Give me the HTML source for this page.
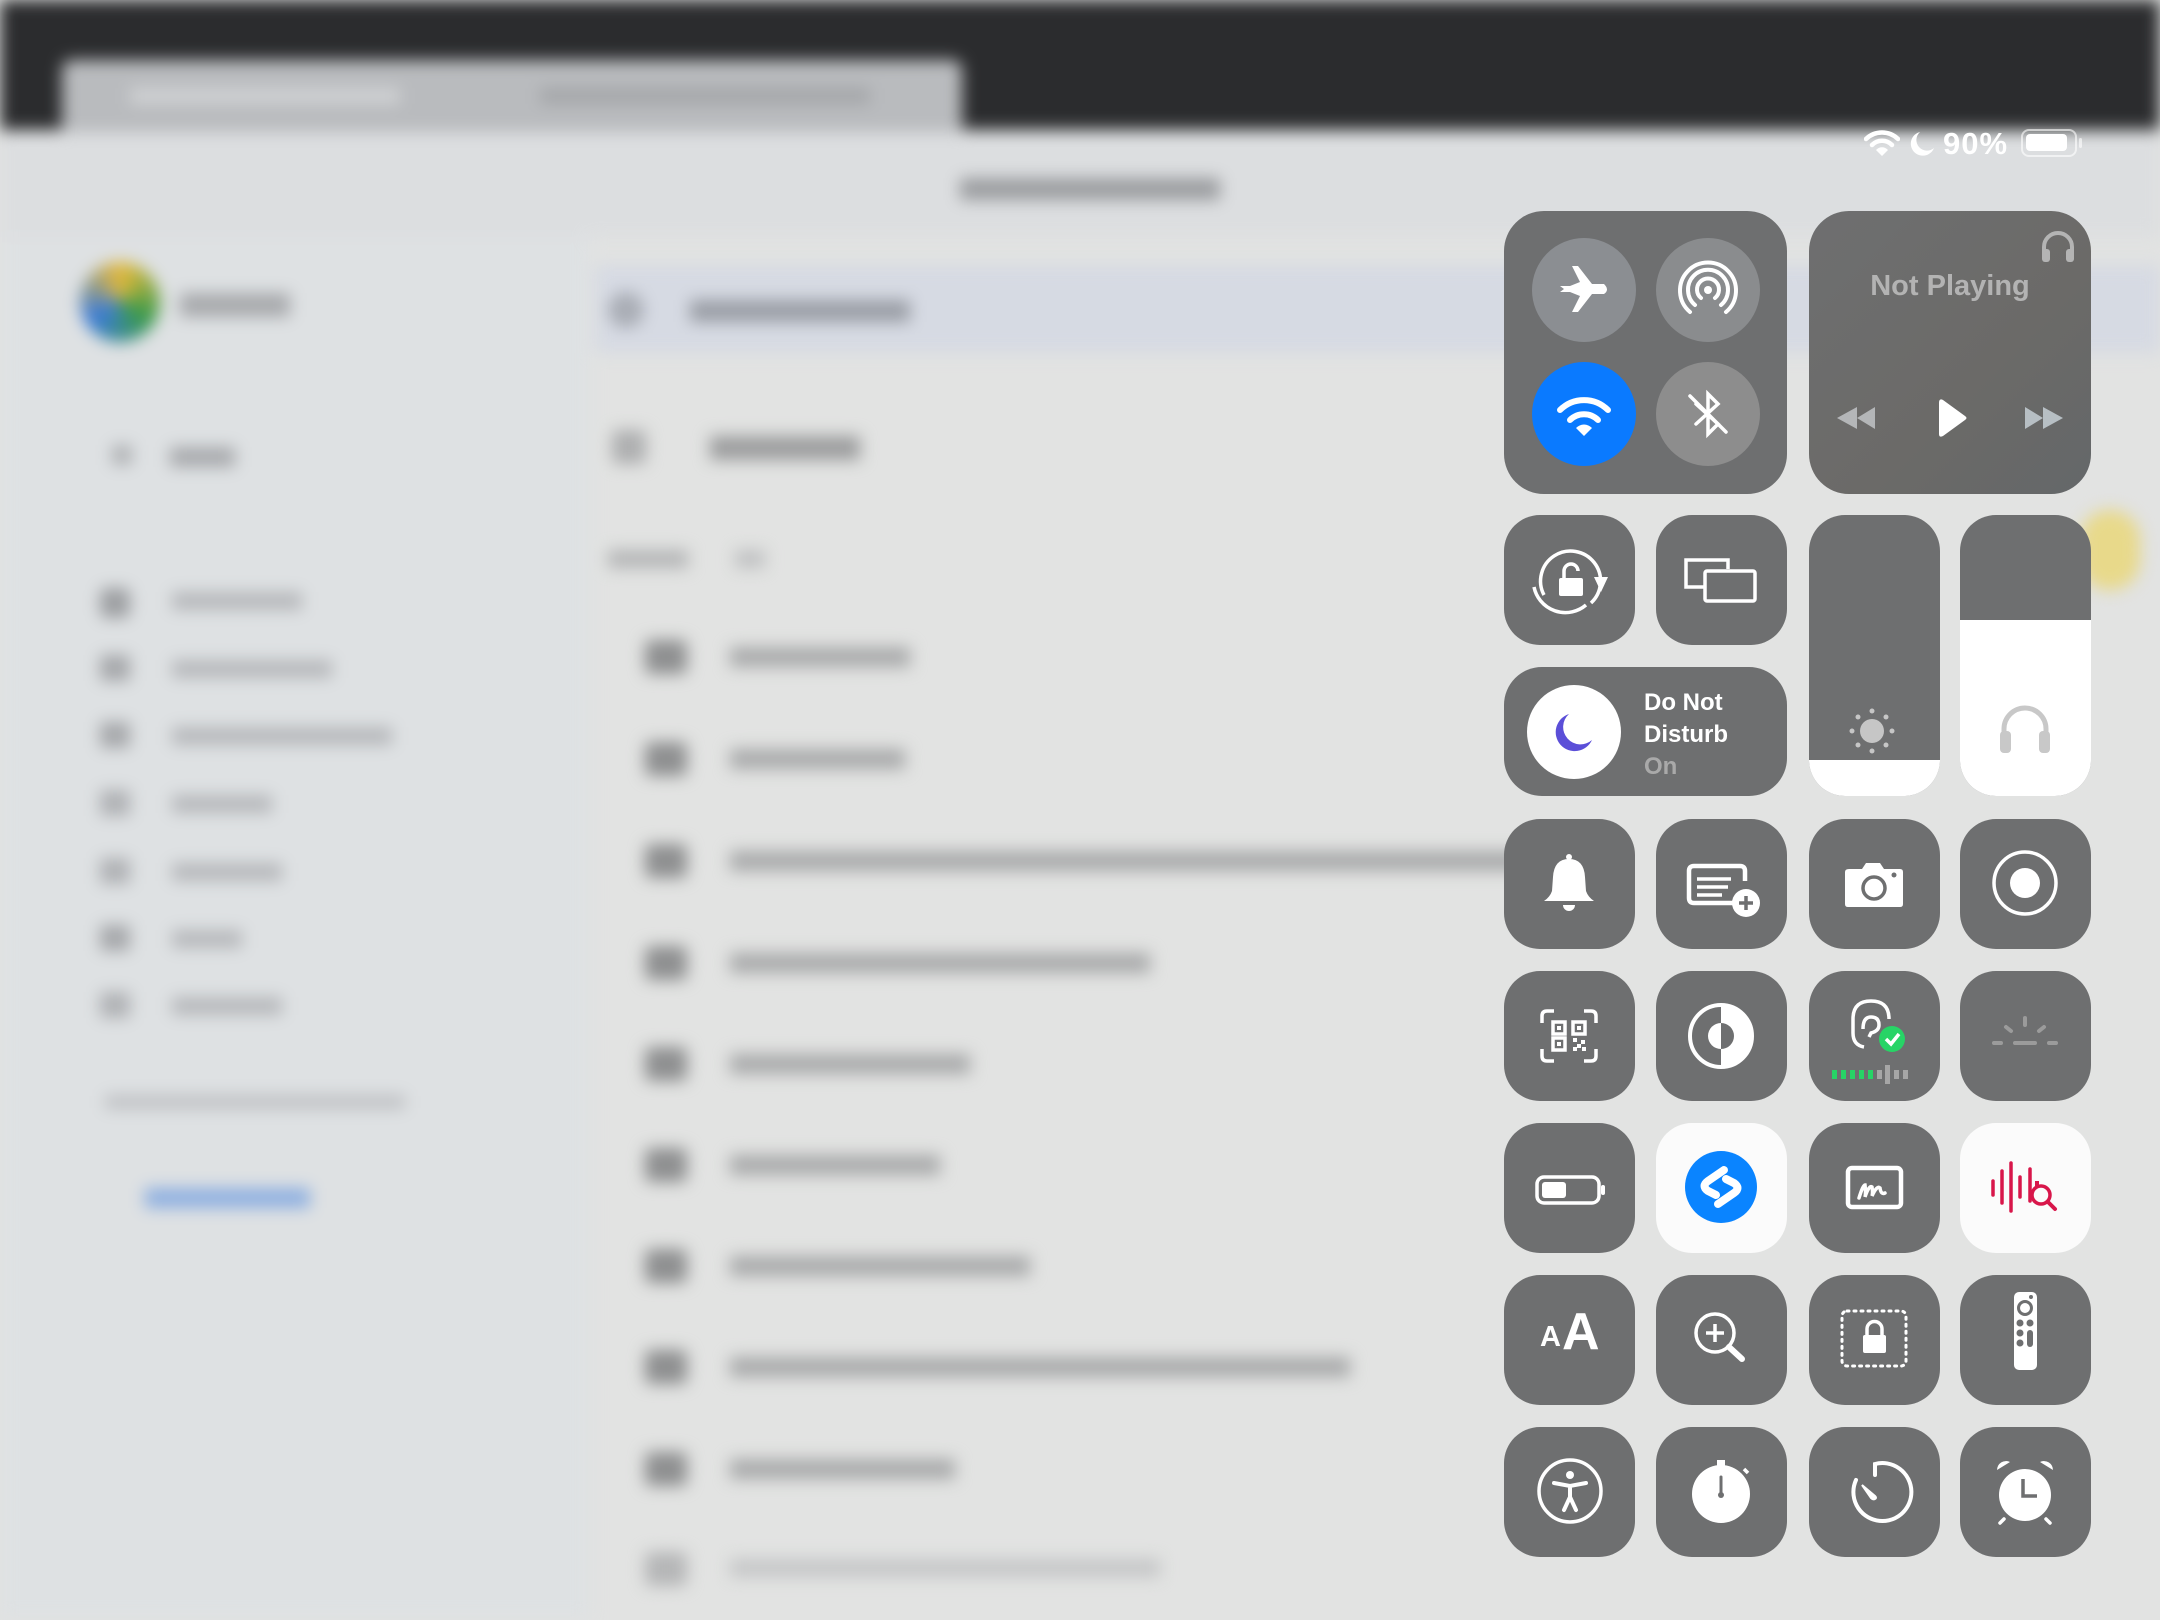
<!DOCTYPE html>
<html><head><meta charset="utf-8"><style>
*{margin:0;padding:0;box-sizing:border-box}
html,body{width:2160px;height:1620px;overflow:hidden;background:#e2e3e2;font-family:"Liberation Sans",sans-serif}
#bg{position:absolute;left:0;top:0;width:2160px;height:1620px;filter:blur(8px)}
#bg div{position:absolute}
.t{position:absolute;background:#6e6f70;border-radius:36px}
.t svg{position:absolute;left:0;top:0}
.w{background:#fbfbfb}
</style></head><body>
<div id="bg">
 <div style="left:0;top:0;width:2160px;height:130px;background:#2b2c2e"></div>
 <div style="left:62px;top:60px;width:900px;height:75px;background:#b9bbbe;border-radius:10px 10px 0 0"></div>
 <div style="left:130px;top:88px;width:270px;height:16px;background:#d0d2d4"></div>
 <div style="left:540px;top:88px;width:330px;height:16px;background:#a4a6a9"></div>
 <div style="left:0;top:132px;width:2160px;height:105px;background:#dcdee0"></div>
 <div style="left:0;top:237px;width:590px;height:1383px;background:#dee1e3"></div>
 <div style="left:595px;top:265px;width:1565px;height:88px;background:#d6dae3"></div>
 <div style="left:80px;top:262px;width:80px;height:80px;border-radius:50%;background:conic-gradient(#e6b93a,#3a9a4a,#3b7bd9,#e6b93a)"></div>
 <div style="left:180px;top:293px;width:110px;height:24px;background:#a8aaad"></div>
 <div style="left:960px;top:178px;width:260px;height:22px;background:#9b9da0"></div>
 <div style="left:608px;top:292px;width:36px;height:36px;background:#a9adb5;border-radius:50%"></div>
 <div style="left:690px;top:300px;width:220px;height:22px;background:#9a9ea6"></div>
 <div style="left:612px;top:430px;width:34px;height:34px;background:#aeafb0;border-radius:6px"></div>
 <div style="left:710px;top:436px;width:150px;height:24px;background:#9c9d9e"></div>
 <div style="left:608px;top:550px;width:80px;height:18px;background:#b4b5b6"></div>
 <div style="left:735px;top:550px;width:30px;height:18px;background:#c0c1c2"></div>
 <div style="left:112px;top:445px;width:20px;height:20px;background:#b0b2b5"></div>
 <div style="left:170px;top:447px;width:65px;height:20px;background:#a8aaad"></div>
 <div style="left:145px;top:1188px;width:165px;height:20px;background:#8fb0e0"></div>
 <!-- sidebar items -->
 <div style="left:100px;top:588px;width:30px;height:30px;background:#9d9fa2;border-radius:6px"></div><div style="left:172px;top:592px;width:130px;height:18px;background:#b6b8bb"></div>
 <div style="left:100px;top:655px;width:30px;height:26px;background:#a6a8ab"></div><div style="left:172px;top:660px;width:160px;height:18px;background:#b6b8bb"></div>
 <div style="left:100px;top:722px;width:30px;height:26px;background:#a6a8ab"></div><div style="left:172px;top:727px;width:220px;height:18px;background:#b6b8bb"></div>
 <div style="left:100px;top:790px;width:30px;height:26px;background:#b0b2b5"></div><div style="left:172px;top:795px;width:100px;height:18px;background:#b6b8bb"></div>
 <div style="left:100px;top:858px;width:30px;height:26px;background:#b0b2b5"></div><div style="left:172px;top:863px;width:110px;height:18px;background:#b6b8bb"></div>
 <div style="left:100px;top:925px;width:30px;height:26px;background:#a6a8ab"></div><div style="left:172px;top:930px;width:70px;height:18px;background:#b6b8bb"></div>
 <div style="left:100px;top:992px;width:30px;height:26px;background:#b0b2b5"></div><div style="left:172px;top:997px;width:110px;height:18px;background:#b6b8bb"></div>
 <div style="left:105px;top:1095px;width:300px;height:14px;background:#bfc1c4"></div>
 <!-- list -->
 <div style="left:645px;top:640px;width:42px;height:34px;background:#8e8f90;border-radius:6px"></div><div style="left:730px;top:647px;width:180px;height:20px;background:#a9aaab"></div>
 <div style="left:645px;top:742px;width:42px;height:34px;background:#8e8f90;border-radius:6px"></div><div style="left:730px;top:749px;width:175px;height:20px;background:#a9aaab"></div>
 <div style="left:645px;top:844px;width:42px;height:34px;background:#8e8f90;border-radius:6px"></div><div style="left:730px;top:851px;width:800px;height:20px;background:#a9aaab"></div>
 <div style="left:645px;top:946px;width:42px;height:34px;background:#8e8f90;border-radius:6px"></div><div style="left:730px;top:953px;width:420px;height:20px;background:#a9aaab"></div>
 <div style="left:645px;top:1047px;width:42px;height:34px;background:#8e8f90;border-radius:6px"></div><div style="left:730px;top:1054px;width:240px;height:20px;background:#a9aaab"></div>
 <div style="left:645px;top:1148px;width:42px;height:34px;background:#8e8f90;border-radius:6px"></div><div style="left:730px;top:1155px;width:210px;height:20px;background:#a9aaab"></div>
 <div style="left:645px;top:1249px;width:42px;height:34px;background:#8e8f90;border-radius:6px"></div><div style="left:730px;top:1256px;width:300px;height:20px;background:#a9aaab"></div>
 <div style="left:645px;top:1350px;width:42px;height:34px;background:#8e8f90;border-radius:6px"></div><div style="left:730px;top:1357px;width:620px;height:20px;background:#a9aaab"></div>
 <div style="left:645px;top:1452px;width:42px;height:34px;background:#8e8f90;border-radius:6px"></div><div style="left:730px;top:1459px;width:225px;height:20px;background:#a9aaab"></div>
 <div style="left:645px;top:1552px;width:42px;height:34px;background:#b5b6b7;border-radius:6px"></div><div style="left:730px;top:1559px;width:430px;height:18px;background:#c5c6c7"></div>
 <div style="left:2080px;top:510px;width:60px;height:80px;background:#e8d98a;border-radius:30px"></div>
</div>

<!-- status bar -->
<svg style="position:absolute;left:1864px;top:129px" width="36" height="28" viewBox="0 0 36 28"><path d="M2 10 A23 23 0 0 1 34 10" stroke="#fff" stroke-width="4.5" fill="none" stroke-linecap="round"/><path d="M8 16 A14 14 0 0 1 28 16" stroke="#fff" stroke-width="4.5" fill="none" stroke-linecap="round"/><path d="M18 27 L12 21 A8 8 0 0 1 24 21Z" fill="#fff"/></svg>
<svg style="position:absolute;left:1908px;top:130px" width="28" height="28" viewBox="0 0 28 28"><path d="M12 2 A12 12 0 1 0 26 18 A10 10 0 0 1 12 2Z" fill="#fff"/></svg>
<div style="position:absolute;left:1943px;top:126px;font-size:31px;font-weight:bold;color:#fff;letter-spacing:1px">90%</div>
<div style="position:absolute;left:2021px;top:129px;width:56px;height:28px;border:2.5px solid rgba(255,255,255,.6);border-radius:8px"><div style="position:absolute;left:3px;top:3px;width:41px;height:17px;background:#fff;border-radius:4px"></div></div>
<div style="position:absolute;left:2079px;top:138px;width:3px;height:10px;background:rgba(255,255,255,.6);border-radius:2px"></div>

<!-- connectivity -->
<div class="t" style="left:1504px;top:211px;width:283px;height:283px;border-radius:40px">
 <div style="position:absolute;left:28px;top:27px;width:104px;height:104px;border-radius:50%;background:#8b8e92"></div>
 <div style="position:absolute;left:152px;top:27px;width:104px;height:104px;border-radius:50%;background:#8a8c8e"></div>
 <div style="position:absolute;left:28px;top:151px;width:104px;height:104px;border-radius:50%;background:#0a7aff"></div>
 <div style="position:absolute;left:152px;top:151px;width:104px;height:104px;border-radius:50%;background:#8d8d8d"></div>
 <svg width="283" height="283" viewBox="0 0 283 283">
  <g transform="translate(80,79)" fill="#fff"><path d="M-24 -4 L-14 -4 L-4 -8 L-12 -24 L-6 -24 L8 -6 L20 -6 Q26 0 20 4 L8 4 L-6 22 L-12 22 L-4 6 L-14 2 L-24 2 L-20 -1Z"/></g>
  <g transform="translate(204,79)" fill="none" stroke="#fff" stroke-width="4" stroke-linecap="round"><path d="M-13 15 A20 20 0 1 1 13 15"/><path d="M-7 8 A11 11 0 1 1 7 8"/><circle cx="0" cy="0" r="4" fill="#fff" stroke="none"/><path d="M-18 22 A28 28 0 1 1 18 22"/></g>
  <g transform="translate(80,207)"><path d="M-24 -8 A34 34 0 0 1 24 -8" stroke="#fff" stroke-width="6" fill="none" stroke-linecap="round"/><path d="M-14 2 A20 20 0 0 1 14 2" stroke="#fff" stroke-width="6" fill="none" stroke-linecap="round"/><path d="M0 18 L-8 10 A11 11 0 0 1 8 10Z" fill="#fff"/></g>
  <g transform="translate(204,203)" fill="none" stroke="#fff" stroke-width="3.5" stroke-linecap="round"><path d="M-12 -10 L10 10 L0 20 L0 -20 L10 -10 L-12 10"/><path d="M-18 -18 L18 18"/></g>
 </svg>
</div>

<!-- media -->
<div class="t" style="left:1809px;top:211px;width:282px;height:283px;border-radius:40px;background:linear-gradient(135deg,#6e6f70,#6b6a68 60%,#646769)">
 <svg style="left:230px;top:18px" width="38" height="36" viewBox="0 0 38 36"><path d="M5 28 V18 A14 14 0 0 1 33 18 V28" stroke="#b4b4b4" stroke-width="4" fill="none"/><rect x="3" y="20" width="8" height="13" rx="3" fill="#b4b4b4"/><rect x="27" y="20" width="8" height="13" rx="3" fill="#b4b4b4"/></svg>
 <div style="position:absolute;left:0;width:282px;top:59px;text-align:center;font-size:29px;font-weight:bold;color:#b3b3b3">Not Playing</div>
 <svg width="282" height="283" viewBox="0 0 282 283">
  <g fill="#b4b6b8"><path d="M66 196 V218 L48 207Z"/><path d="M48 196 V218 L28 207Z"/></g>
  <path d="M130 192 V223 Q130 227 134 225 L156 209 Q159 207 156 205 L134 189 Q130 187 130 192Z" fill="#fff"/>
  <g fill="#b7bfc4"><path d="M216 196 V218 L234 207Z"/><path d="M234 196 V218 L254 207Z"/></g>
 </svg>
</div>

<!-- row 2 -->
<div class="t" style="left:1504px;top:515px;width:131px;height:130px">
 <svg width="131" height="130" viewBox="0 0 131 130"><path d="M40 80 A30 30 0 1 1 87 88" stroke="#fff" stroke-width="3.5" fill="none"/><path d="M30 72 A32 32 0 0 0 82 90" stroke="#fff" stroke-width="3.5" fill="none"/><path d="M90 62 L104 62 L97 77Z" fill="#fff"/><rect x="55" y="63" width="24" height="18" rx="2" fill="#fff"/><path d="M60 63 V56 A7 7 0 0 1 74 56" stroke="#fff" stroke-width="3.5" fill="none"/></svg>
</div>
<div class="t" style="left:1656px;top:515px;width:131px;height:130px">
 <svg width="131" height="130" viewBox="0 0 131 130"><path d="M48 72 H30 V45 H72 V54" stroke="#fff" stroke-width="3.5" fill="none"/><rect x="49" y="56" width="50" height="30" rx="2" stroke="#fff" stroke-width="3.5" fill="none"/></svg>
</div>
<div class="t" style="left:1809px;top:515px;width:131px;height:281px;overflow:hidden">
 <div style="position:absolute;left:0;top:245px;width:131px;height:36px;background:#fff"></div>
 <svg width="131" height="281" viewBox="0 0 131 281"><circle cx="63" cy="216" r="12" fill="#c6c6c6"/><g fill="#c6c6c6"><circle cx="63" cy="196" r="2.5"/><circle cx="63" cy="236" r="2.5"/><circle cx="43" cy="216" r="2.5"/><circle cx="83" cy="216" r="2.5"/><circle cx="49" cy="202" r="2.5"/><circle cx="77" cy="202" r="2.5"/><circle cx="49" cy="230" r="2.5"/><circle cx="77" cy="230" r="2.5"/></g></svg>
</div>
<div class="t" style="left:1960px;top:515px;width:131px;height:281px;overflow:hidden">
 <div style="position:absolute;left:0;top:105px;width:131px;height:176px;background:#fff"></div>
 <svg width="131" height="281" viewBox="0 0 131 281"><path d="M44 230 V214 A21 21 0 0 1 86 214 V230" stroke="#c8c8c8" stroke-width="5" fill="none"/><rect x="40" y="216" width="11" height="22" rx="4" fill="#c8c8c8"/><rect x="79" y="216" width="11" height="22" rx="4" fill="#c8c8c8"/></svg>
</div>

<!-- DND -->
<div class="t" style="left:1504px;top:667px;width:283px;height:129px;border-radius:38px">
 <div style="position:absolute;left:23px;top:18px;width:94px;height:94px;border-radius:50%;background:#fff"></div>
 <svg style="left:48px;top:43px" width="44" height="44" viewBox="0 0 44 44"><path d="M17 4 A19 19 0 1 0 40 30 A16 16 0 0 1 17 4Z" fill="#5b4fd8"/></svg>
 <div style="position:absolute;left:140px;top:20px;font-size:24px;font-weight:bold;color:#fff;line-height:32px">Do Not<br>Disturb<br><span style="color:#a9a9a9">On</span></div>
</div>

<!-- row 4 -->
<div class="t" style="left:1504px;top:819px;width:131px;height:130px">
 <svg width="131" height="130" viewBox="0 0 131 130"><path d="M65 40 Q80 40 81 58 L82 72 Q84 78 90 82 H40 Q46 78 48 72 L49 58 Q50 40 65 40Z" fill="#fff"/><circle cx="65" cy="38" r="3" fill="#fff"/><path d="M59 86 A6 6 0 0 0 71 86Z" fill="#fff"/></svg>
</div>
<div class="t" style="left:1656px;top:819px;width:131px;height:130px">
 <svg width="131" height="130" viewBox="0 0 131 130"><path d="M78 84 H38 Q33 84 33 79 V52 Q33 47 38 47 H84 Q89 47 89 52 V62" stroke="#fff" stroke-width="4.5" fill="none"/><g stroke="#fff" stroke-width="3.5"><path d="M41 60 H75"/><path d="M41 68 H72"/><path d="M41 76 H66"/></g><circle cx="90" cy="84" r="14" fill="#fff"/><path d="M90 77 V91 M83 84 H97" stroke="#6e6f70" stroke-width="3.5"/></svg>
</div>
<div class="t" style="left:1809px;top:819px;width:131px;height:130px">
 <svg width="131" height="130" viewBox="0 0 131 130"><path d="M36 53 Q36 50 40 50 H53 L57 44 H71 L75 50 H91 Q94 50 94 53 V85 Q94 88 91 88 H39 Q36 88 36 85Z" fill="#fff"/><circle cx="65" cy="69" r="11" fill="none" stroke="#6e6f70" stroke-width="3.5"/><circle cx="85" cy="56" r="2.5" fill="#6e6f70"/></svg>
</div>
<div class="t" style="left:1960px;top:819px;width:131px;height:130px">
 <svg width="131" height="130" viewBox="0 0 131 130"><circle cx="65" cy="64" r="31" stroke="#fff" stroke-width="3.5" fill="none"/><circle cx="65" cy="64" r="15" fill="#fff"/></svg>
</div>

<!-- row 5 -->
<div class="t" style="left:1504px;top:971px;width:131px;height:130px">
 <svg width="131" height="130" viewBox="0 0 131 130"><g stroke="#fff" stroke-width="3.5" fill="none"><path d="M38 52 V45 Q38 40 43 40 H50"/><path d="M80 40 H87 Q92 40 92 45 V52"/><path d="M38 78 V85 Q38 90 43 90 H50"/><path d="M80 90 H87 Q92 90 92 85 V78"/><rect x="49" y="51" width="12" height="12"/><rect x="69" y="51" width="12" height="12"/><rect x="49" y="67" width="12" height="12"/></g><g fill="#fff"><rect x="53" y="55" width="4" height="4"/><rect x="73" y="55" width="4" height="4"/><rect x="53" y="71" width="4" height="4"/><rect x="69" y="67" width="4" height="4"/><rect x="77" y="69" width="4" height="4"/><rect x="73" y="73" width="4" height="4"/><rect x="69" y="76" width="4" height="4"/><rect x="78" y="76" width="4" height="4"/></g></svg>
</div>
<div class="t" style="left:1656px;top:971px;width:131px;height:130px">
 <svg width="131" height="130" viewBox="0 0 131 130"><circle cx="65" cy="65" r="31" stroke="#fff" stroke-width="4" fill="none"/><path d="M65 34 A31 31 0 0 1 65 96Z" fill="#fff"/><circle cx="65" cy="65" r="13" fill="#fff"/><path d="M65 52 A13 13 0 0 1 65 78Z" fill="#6e6f70"/></svg>
</div>
<div class="t" style="left:1809px;top:971px;width:131px;height:130px">
 <svg width="131" height="130" viewBox="0 0 131 130"><path d="M55 76 Q44 74 44 62 V48 Q44 30 62 30 Q80 30 80 48" stroke="#fff" stroke-width="3.5" fill="none"/><path d="M54 58 Q54 46 62 46 Q70 46 70 54 Q70 60 62 62 L60 66" stroke="#fff" stroke-width="3.5" fill="none"/><circle cx="83" cy="68" r="13" fill="#27d466"/><path d="M77 68 L82 73 L90 63" stroke="#fff" stroke-width="3.5" fill="none"/><g fill="#27d466"><rect x="23" y="99" width="5" height="9"/><rect x="32" y="99" width="5" height="9"/><rect x="41" y="99" width="5" height="9"/><rect x="50" y="99" width="5" height="9"/><rect x="59" y="99" width="5" height="9"/></g><g fill="#a6a6a6"><rect x="68" y="99" width="5" height="9"/><rect x="76" y="94" width="5" height="19"/><rect x="85" y="99" width="5" height="9"/><rect x="94" y="99" width="5" height="9"/></g></svg>
</div>
<div class="t" style="left:1960px;top:971px;width:131px;height:130px">
 <svg width="131" height="130" viewBox="0 0 131 130"><g stroke="#9b9b9b" stroke-width="4" stroke-linecap="round"><path d="M65 47 V54"/><path d="M46 56 L51 60"/><path d="M84 56 L79 60"/><path d="M55 72 H75"/><path d="M34 72 H41"/><path d="M89 72 H96"/></g></svg>
</div>

<!-- row 6 -->
<div class="t" style="left:1504px;top:1123px;width:131px;height:130px">
 <svg width="131" height="130" viewBox="0 0 131 130"><rect x="33" y="54" width="62" height="26" rx="7" stroke="#fff" stroke-width="3.5" fill="none"/><rect x="38" y="59" width="24" height="16" rx="3" fill="#fff"/><rect x="97" y="62" width="4" height="10" rx="2" fill="#fff"/></svg>
</div>
<div class="t w" style="left:1656px;top:1123px;width:131px;height:130px">
 <svg width="131" height="130" viewBox="0 0 131 130"><circle cx="65" cy="64" r="36" fill="#0a84ff"/><path d="M68 47 L52 58 Q45 63 52 68 L60 72 M62 81 L78 70 Q85 65 78 60 L70 56" stroke="#fff" stroke-width="8" fill="none" stroke-linecap="round"/></svg>
</div>
<div class="t" style="left:1809px;top:1123px;width:131px;height:130px">
 <svg width="131" height="130" viewBox="0 0 131 130"><rect x="39" y="45" width="53" height="39" rx="4" stroke="#fff" stroke-width="4.5" fill="none"/><path d="M50 75 Q54 62 56 62 Q57 70 56 74 Q60 62 63 64 Q64 70 63 73 Q68 62 71 65 Q72 72 76 70" stroke="#fff" stroke-width="3.5" fill="none" stroke-linecap="round"/></svg>
</div>
<div class="t w" style="left:1960px;top:1123px;width:131px;height:130px">
 <svg width="131" height="130" viewBox="0 0 131 130"><g stroke="#d8164a" stroke-width="3.5" stroke-linecap="round"><path d="M33 58 V72"/><path d="M42 48 V80"/><path d="M51 40 V88"/><path d="M60 54 V74"/><path d="M70 46 V78"/></g><circle cx="81" cy="72" r="9" stroke="#d8164a" stroke-width="3.5" fill="none"/><path d="M88 79 L95 86" stroke="#d8164a" stroke-width="4" stroke-linecap="round"/><rect x="75" y="58" width="4" height="5" fill="#d8164a"/></svg>
</div>

<!-- row 7 -->
<div class="t" style="left:1504px;top:1275px;width:131px;height:130px">
 <div style="position:absolute;left:36px;top:46px;font-size:29px;font-weight:bold;color:#fff">A</div>
 <div style="position:absolute;left:58px;top:27px;font-size:52px;font-weight:bold;color:#fff">A</div>
</div>
<div class="t" style="left:1656px;top:1275px;width:131px;height:130px">
 <svg width="131" height="130" viewBox="0 0 131 130"><circle cx="59" cy="58" r="19" stroke="#fff" stroke-width="3.5" fill="none"/><path d="M59 49 V67 M50 58 H68" stroke="#fff" stroke-width="3.5"/><path d="M73 72 L86 84" stroke="#fff" stroke-width="6" stroke-linecap="round"/></svg>
</div>
<div class="t" style="left:1809px;top:1275px;width:131px;height:130px">
 <svg width="131" height="130" viewBox="0 0 131 130"><rect x="33" y="36" width="64" height="55" rx="5" stroke="#fff" stroke-width="3" fill="none" stroke-dasharray="2 5" stroke-linecap="round"/><rect x="54" y="60" width="23" height="18" rx="2" fill="#fff"/><path d="M58 60 V54 A7.5 7.5 0 0 1 73 54 V60" stroke="#fff" stroke-width="3.5" fill="none"/></svg>
</div>
<div class="t" style="left:1960px;top:1275px;width:131px;height:130px">
 <svg width="131" height="130" viewBox="0 0 131 130"><rect x="54" y="17" width="23" height="78" rx="5" fill="#fff"/><circle cx="65" cy="33" r="6.5" fill="none" stroke="#6e6f70" stroke-width="3"/><circle cx="71" cy="22" r="2" fill="#6e6f70"/><circle cx="60" cy="48" r="3.5" fill="#6e6f70"/><circle cx="70" cy="48" r="3.5" fill="#6e6f70"/><circle cx="60" cy="58" r="3.5" fill="#6e6f70"/><circle cx="60" cy="68" r="3.5" fill="#6e6f70"/><rect x="67" y="55" width="6" height="17" rx="3" fill="#6e6f70"/></svg>
</div>

<!-- row 8 -->
<div class="t" style="left:1504px;top:1427px;width:131px;height:130px">
 <svg width="131" height="130" viewBox="0 0 131 130"><circle cx="66" cy="64" r="31" stroke="#fff" stroke-width="3.5" fill="none"/><circle cx="66" cy="48" r="4" fill="#fff"/><path d="M50 56 L66 59 L82 56 M66 59 V70 L60 83 M66 70 L72 83" stroke="#fff" stroke-width="4" fill="none" stroke-linecap="round"/></svg>
</div>
<div class="t" style="left:1656px;top:1427px;width:131px;height:130px">
 <svg width="131" height="130" viewBox="0 0 131 130"><circle cx="65" cy="67" r="29" fill="#fff"/><rect x="61" y="33" width="8" height="6" fill="#fff"/><path d="M88 42 L92 46" stroke="#fff" stroke-width="3.5"/><path d="M65 50 V68" stroke="#6e6f70" stroke-width="3" stroke-linecap="round"/><circle cx="65" cy="68" r="3" fill="#6e6f70"/></svg>
</div>
<div class="t" style="left:1809px;top:1427px;width:131px;height:130px">
 <svg width="131" height="130" viewBox="0 0 131 130"><path d="M47 53 A29 29 0 1 0 66 37 V48" stroke="#fff" stroke-width="4" fill="none" stroke-linecap="round"/><path d="M53 58 L66 69 Q68 71 66 72 Q64 73 62 71Z" fill="#fff" stroke="#fff" stroke-width="2"/></svg>
</div>
<div class="t" style="left:1960px;top:1427px;width:131px;height:130px">
 <svg width="131" height="130" viewBox="0 0 131 130"><circle cx="65" cy="68" r="26" fill="#fff"/><path d="M37 43 A9 9 0 0 1 50 35Z" fill="#fff"/><path d="M93 43 A9 9 0 0 0 80 35Z" fill="#fff"/><path d="M44 92 L40 96 M86 92 L90 96" stroke="#fff" stroke-width="3.5" stroke-linecap="round"/><path d="M63 52 V69 H77" stroke="#6e6f70" stroke-width="3.5" fill="none"/></svg>
</div>
</body></html>
